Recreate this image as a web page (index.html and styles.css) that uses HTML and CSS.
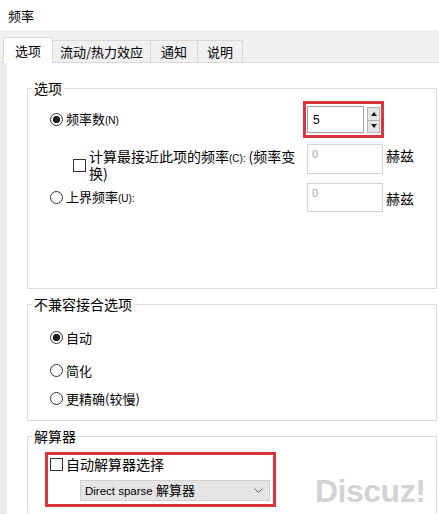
FILE: index.html
```html
<!DOCTYPE html>
<html>
<head>
    <title>频率</title>
    <link rel="stylesheet" href="styles.css">
</head>
<body>
    <div class="title">频率</div>

    <div class="tabs">
        <div class="tab active">选项</div>
        <div class="tab tab-flow">流动/热力效应</div>
        <div class="tab tab-notice">通知</div>
        <div class="tab tab-help">说明</div>
    </div>

    <div class="panel">
        <fieldset class="group">
            <legend>选项</legend>
            <div class="group-body options-body">
                <div class="row">
                    <label class="opt"><input type="radio" name="mode" class="radio" checked><span>频率数<small>(N)</small></span></label>
                    <div class="field">
                        <div class="spin">
                            <div class="spin-input">5</div>
                            <div class="spin-btns">
                                <span class="spin-btn up"></span>
                                <span class="spin-btn down"></span>
                            </div>
                        </div>
                    </div>
                </div>
                <div class="row row-near">
                    <label class="opt opt-check"><input type="checkbox" class="check"><span class="wrap-label">计算最接近此项的频率<small>(C): </small>(频率变换)</span></label>
                    <div class="field"><div class="numbox">0</div></div>
                    <div class="unit unit-top">赫兹</div>
                </div>
                <div class="row row-upper">
                    <label class="opt"><input type="radio" name="mode" class="radio"><span>上界频率<small>(U):</small></span></label>
                    <div class="field"><div class="numbox short">0</div></div>
                    <div class="unit">赫兹</div>
                </div>
            </div>
        </fieldset>

        <fieldset class="group">
            <legend>不兼容接合选项</legend>
            <div class="group-body joint-body">
                <label class="choice"><input type="radio" name="joint" class="radio" checked><span>自动</span></label>
                <label class="choice second"><input type="radio" name="joint" class="radio"><span>简化</span></label>
                <label class="choice third"><input type="radio" name="joint" class="radio"><span>更精确(较慢)</span></label>
            </div>
        </fieldset>

        <fieldset class="group">
            <legend>解算器</legend>
            <div class="group-body solver-body">
                <div class="solver-box">
                    <label class="choice auto-solver"><input type="checkbox" class="check"><span>自动解算器选择</span></label>
                    <div class="select">
                        <span><span class="latin">Direct sparse </span>解算器</span>
                        <svg width="9" height="6" viewBox="0 0 9 6"><polyline points="0.5,0.5 4.5,4.5 8.5,0.5" fill="none" stroke="#606060" stroke-width="1"/></svg>
                    </div>
                </div>
            </div>
        </fieldset>
    </div>

    <div class="watermark">Discuz!</div>
</body>
</html>
```

FILE: styles.css
```css
body {
    margin: 0;
    width: 439px;
    height: 514px;
    overflow: hidden;
    background: #fff;
    color: #000;
    font-family: "Noto Sans CJK SC", sans-serif;
    font-size: 13px;
}
small {
    font-family: "Liberation Sans", sans-serif;
    font-size: 10px;
}
.title {
    height: 30px;
    box-sizing: border-box;
    padding: 8px 0 0 8px;
    line-height: 16px;
}
.tabs {
    display: flex;
    align-items: flex-end;
    height: 32px;
    padding-left: 3px;
    background: #f0f0f0;
    border-bottom: 1px solid #d9d9d9;
}
.tab {
    height: 22px;
    box-sizing: border-box;
    margin-left: -1px;
    border: 1px solid #d9d9d9;
    border-bottom: none;
    background: #f0f0f0;
    display: flex;
    align-items: center;
    justify-content: center;
    line-height: 16px;
}
.tab.active {
    width: 50px;
    height: 26px;
    margin: 0 0 -1px 0;
    background: #fff;
    position: relative;
}
.tab-flow { width: 99px; }
.tab-notice { width: 48px; }
.tab-help { width: 46px; }

.panel {
    border-left: 7px solid #ebebeb;
    padding: 17px 2px 0 20px;
    background: #fff;
}
.group {
    margin: 0 0 7px 0;
    padding: 0;
    min-width: 0;
    border: 1px solid #dcdcdc;
}
.group legend {
    margin-left: 4px;
    padding: 0 2px;
    font-size: 14px;
    line-height: 16px;
}
.options-body {
    padding: 5px 0 76px 22px;
}
.row {
    display: flex;
    align-items: center;
}
.opt {
    width: 253px;
    display: flex;
    align-items: center;
    gap: 3px;
    line-height: 16px;
}
.field {
    width: 83px;
}
.unit {
    font-size: 14px;
    line-height: 16px;
}
.radio, .check {
    appearance: none;
    flex: none;
    margin: 0;
    width: 13px;
    height: 13px;
    box-sizing: border-box;
    border: 1px solid #333;
    background: #fff;
}
.radio {
    border-radius: 50%;
}
.radio:checked {
    background: radial-gradient(circle, #1e1e1e 0 3.4px, #fff 4px);
}

.spin {
    width: 81px;
    height: 37px;
    box-sizing: border-box;
    border: 3px solid #d9363e;
    padding: 2px 1px;
    display: flex;
    gap: 3px;
}
.spin-input {
    width: 57px;
    height: 27px;
    box-sizing: border-box;
    border: 1px solid #a0a0a0;
    padding-left: 5px;
    display: flex;
    align-items: center;
    font-family: "Liberation Sans", sans-serif;
    font-size: 12px;
}
.spin-btns {
    width: 13px;
    height: 26px;
    margin-top: 1px;
    display: flex;
    flex-direction: column;
}
.spin-btn {
    flex: 1;
    border: 1px solid #b5b5b5;
    background: #e6e6e6;
    display: flex;
    align-items: center;
    justify-content: center;
}
.spin-btn.down {
    border-top: none;
}
.spin-btn::before {
    content: "";
    border-left: 3px solid transparent;
    border-right: 3px solid transparent;
}
.spin-btn.up::before {
    border-bottom: 4px solid #111;
}
.spin-btn.down::before {
    border-top: 4px solid #111;
}

.row-near {
    align-items: flex-start;
    height: 30px;
    margin-top: 6px;
}
.opt-check {
    margin-top: 5px;
    padding-left: 23px;
    box-sizing: border-box;
}
.wrap-label {
    width: 212px;
    font-size: 14px;
    line-height: 15px;
}
.numbox {
    width: 76px;
    height: 30px;
    margin-left: 4px;
    box-sizing: border-box;
    border: 1px solid #d4d4d4;
    padding: 3px 0 0 4px;
    color: #a6a6a6;
    font-family: "Liberation Sans", sans-serif;
    font-size: 11px;
    line-height: 12px;
}
.numbox.short {
    height: 29px;
}
.unit-top {
    margin-top: 3px;
}
.row-upper {
    margin-top: 9px;
}

.joint-body {
    padding: 15px 0 12px 22px;
}
.choice {
    display: flex;
    align-items: center;
    gap: 3px;
    height: 20px;
}
.choice.second {
    margin-top: 13px;
}
.choice.third {
    margin-top: 8px;
}

.solver-body {
    padding: 8px 0 30px 17px;
}
.solver-box {
    width: 231px;
    height: 55px;
    box-sizing: border-box;
    border: 3px solid #d9363e;
    padding: 0 0 0 2px;
}
.auto-solver {
    height: 18px;
    font-size: 14px;
}
.select {
    width: 190px;
    height: 21px;
    margin: 7px 0 0 30px;
    box-sizing: border-box;
    border: 1px solid #d0d0d0;
    background: #e5e5e5;
    padding: 0 6px 0 4px;
    display: flex;
    align-items: center;
    justify-content: space-between;
    line-height: 16px;
}
.latin {
    font-family: "Liberation Sans", sans-serif;
    font-size: 11.5px;
}

.watermark {
    position: absolute;
    left: 315px;
    top: 475px;
    font-family: "Liberation Sans", sans-serif;
    font-weight: bold;
    font-size: 32px;
    line-height: 32px;
    letter-spacing: -0.5px;
    color: #d3d3d3;
}
```
